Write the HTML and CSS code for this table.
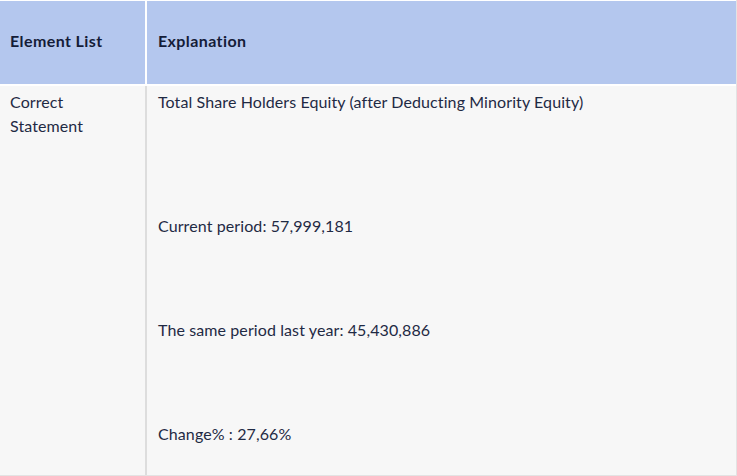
FILE: index.html
```html
<!DOCTYPE html>
<html>
<head>
<meta charset="utf-8">
<link rel="stylesheet" href="styles.css">
</head>
<body>
<div class="table">
  <div class="head">
    <div class="hcell c1">Element List</div>
    <div class="hcell c2">Explanation</div>
  </div>
  <div class="row">
    <div class="cell c1">Correct<br>Statement</div>
    <div class="cell c2">
      <p class="l">Total Share Holders Equity (after Deducting Minority Equity)</p>
      <p class="l cur">Current period: 57,999,181</p>
      <p class="l next">The same period last year: 45,430,886</p>
      <p class="l next">Change% : 27,66%</p>
    </div>
  </div>
</div>
</body>
</html>
```
FILE: styles.css
```css
html, body {
  margin: 0;
  padding: 0;
  background: #ffffff;
}
body {
  font-family: Lato, "Open Sans", sans-serif;
  font-size: 16px;
  letter-spacing: 0.1px;
  color: #1f2a44;
}
.table {
  width: 737px;
  height: 476px;
  padding-top: 1px;
  box-sizing: border-box;
  display: flex;
  flex-direction: column;
  border-right: 1px solid #e3e3e3;
  border-bottom: 1px solid #e3e3e3;
}
.head {
  display: flex;
  height: 83px;
  gap: 2px;
}
.hcell {
  background: #b4c7ee;
  font-weight: 700;
  letter-spacing: 0.4px;
  display: flex;
  align-items: center;
  padding-left: 10px;
  padding-bottom: 4px;
  box-sizing: border-box;
  color: #141c38;
}
.head .c2 {
  padding-left: 11px;
}
.c1 {
  width: 145px;
  flex: none;
  box-sizing: border-box;
}
.c2 {
  flex: 1;
}
.row {
  margin-top: 2px;
  display: flex;
  flex: 1;
  background: #f7f7f7;
}
.cell {
  box-sizing: border-box;
  line-height: 24px;
  padding-top: 4px;
}
.row .c1 {
  padding-left: 10px;
  border-right: 2px solid #dddddd;
  width: 147px;
}
.row .c2 {
  padding-left: 11px;
}
.l {
  margin: 0;
}
.cur {
  margin-top: 100px;
}
.next {
  margin-top: 80px;
}
```
